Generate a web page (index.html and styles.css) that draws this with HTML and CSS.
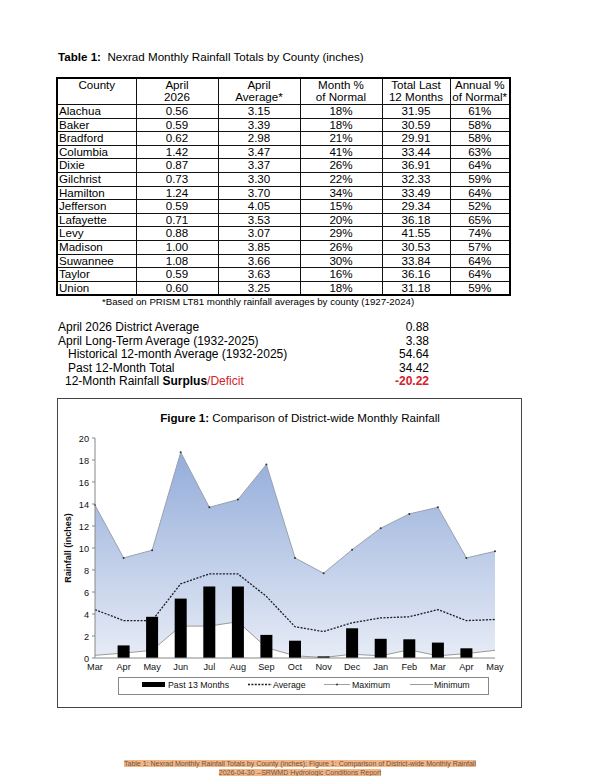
FILE: index.html
```html
<!DOCTYPE html>
<html lang="en">
<head>
    <meta charset="UTF-8">
    <meta name="viewport" content="width=device-width, initial-scale=1.0">
    <title>SRWMD Hydrologic Conditions Report</title>
    <link rel="stylesheet" href="styles.css">
</head>
<body>
    <div class="page">
        <div class="table-title"><b>Table 1:</b>&nbsp; Nexrad Monthly Rainfall Totals by County (inches)</div>

        <table class="rain-table">
            <colgroup>
                <col style="width: 79px">
                <col style="width: 82px">
                <col style="width: 82px">
                <col style="width: 82px">
                <col style="width: 68px">
                <col style="width: 60px">
            </colgroup>
            <thead>
                <tr>
                    <th>County</th>
                    <th>April<br>2026</th>
                    <th>April<br>Average*</th>
                    <th>Month %<br>of Normal</th>
                    <th>Total Last<br>12 Months</th>
                    <th>Annual %<br>of Normal*</th>
                </tr>
            </thead>
            <tbody>
                <tr><td>Alachua</td><td>0.56</td><td>3.15</td><td>18%</td><td>31.95</td><td>61%</td></tr>
                <tr><td>Baker</td><td>0.59</td><td>3.39</td><td>18%</td><td>30.59</td><td>58%</td></tr>
                <tr><td>Bradford</td><td>0.62</td><td>2.98</td><td>21%</td><td>29.91</td><td>58%</td></tr>
                <tr><td>Columbia</td><td>1.42</td><td>3.47</td><td>41%</td><td>33.44</td><td>63%</td></tr>
                <tr><td>Dixie</td><td>0.87</td><td>3.37</td><td>26%</td><td>36.91</td><td>64%</td></tr>
                <tr><td>Gilchrist</td><td>0.73</td><td>3.30</td><td>22%</td><td>32.33</td><td>59%</td></tr>
                <tr><td>Hamilton</td><td>1.24</td><td>3.70</td><td>34%</td><td>33.49</td><td>64%</td></tr>
                <tr><td>Jefferson</td><td>0.59</td><td>4.05</td><td>15%</td><td>29.34</td><td>52%</td></tr>
                <tr><td>Lafayette</td><td>0.71</td><td>3.53</td><td>20%</td><td>36.18</td><td>65%</td></tr>
                <tr><td>Levy</td><td>0.88</td><td>3.07</td><td>29%</td><td>41.55</td><td>74%</td></tr>
                <tr><td>Madison</td><td>1.00</td><td>3.85</td><td>26%</td><td>30.53</td><td>57%</td></tr>
                <tr><td>Suwannee</td><td>1.08</td><td>3.66</td><td>30%</td><td>33.84</td><td>64%</td></tr>
                <tr><td>Taylor</td><td>0.59</td><td>3.63</td><td>16%</td><td>36.16</td><td>64%</td></tr>
                <tr><td>Union</td><td>0.60</td><td>3.25</td><td>18%</td><td>31.18</td><td>59%</td></tr>
            </tbody>
        </table>
        <div class="footnote">*Based on PRISM LT81 monthly rainfall averages by county (1927-2024)</div>

        <div class="summary">
            <div class="label">April 2026 District Average</div><div class="value">0.88</div>
            <div class="label">April Long-Term Average (1932-2025)</div><div class="value">3.38</div>
            <div class="label indent">Historical 12-month Average (1932-2025)</div><div class="value">54.64</div>
            <div class="label indent">Past 12-Month Total</div><div class="value">34.42</div>
            <div class="label indent-sm">12-Month Rainfall <b>Surplus</b><span class="deficit">/Deficit</span></div><div class="value deficit"><b>-20.22</b></div>
        </div>

        <div class="chart-box">
            <svg class="chart" width="465" height="310" viewBox="57 397 465 310">
                <defs>
                    <linearGradient id="rangeFill" gradientUnits="userSpaceOnUse" x1="0" y1="437" x2="0" y2="657">
                        <stop offset="0" stop-color="#8ea8d8"/>
                        <stop offset="1" stop-color="#e7ecf6"/>
                    </linearGradient>
                </defs>

                <text class="chart-title" x="300" y="421" text-anchor="middle"><tspan font-weight="bold">Figure 1:</tspan>  Comparison of District-wide Monthly Rainfall</text>

                <!-- range between monthly minimum and maximum -->
                <polygon fill="url(#rangeFill)" points="95,504.1 123.6,556.9 152.1,549.2 180.7,451.3 209.3,506.3 237.9,498.6 266.4,463.4 295,556.9 323.6,572.3 352.1,548.7 380.7,527.2 409.3,512.9 437.9,506.3 466.4,556.9 495,550.3 495,649.3 466.4,652.6 437.9,654.8 409.3,648.8 380.7,654.8 352.1,653.2 323.6,656.5 295,654.8 266.4,646.6 237.9,620.7 209.3,625.1 180.7,625.1 152.1,649.3 123.6,652.1 95,654.3"/>
                <polyline class="line-min" points="95,654.3 123.6,652.1 152.1,649.3 180.7,625.1 209.3,625.1 237.9,620.7 266.4,646.6 295,654.8 323.6,656.5 352.1,653.2 380.7,654.8 409.3,648.8 437.9,654.8 466.4,652.6 495,649.3"/>
                <polyline class="line-max" points="95,504.1 123.6,556.9 152.1,549.2 180.7,451.3 209.3,506.3 237.9,498.6 266.4,463.4 295,556.9 323.6,572.3 352.1,548.7 380.7,527.2 409.3,512.9 437.9,506.3 466.4,556.9 495,550.3"/>
                <g class="max-dots">
                    <circle cx="95" cy="504.1" r="1"/><circle cx="123.6" cy="556.9" r="1"/><circle cx="152.1" cy="549.2" r="1"/>
                    <circle cx="180.7" cy="451.3" r="1"/><circle cx="209.3" cy="506.3" r="1"/><circle cx="237.9" cy="498.6" r="1"/>
                    <circle cx="266.4" cy="463.4" r="1"/><circle cx="295" cy="556.9" r="1"/><circle cx="323.6" cy="572.3" r="1"/>
                    <circle cx="352.1" cy="548.7" r="1"/><circle cx="380.7" cy="527.2" r="1"/><circle cx="409.3" cy="512.9" r="1"/>
                    <circle cx="437.9" cy="506.3" r="1"/><circle cx="466.4" cy="556.9" r="1"/><circle cx="495" cy="550.3" r="1"/>
                </g>
                <polyline class="line-avg" points="95,608.6 123.6,619.6 152.1,619.6 180.7,582.8 209.3,572.9 237.9,572.9 266.4,595.4 295,625.7 323.6,630.6 352.1,621.8 380.7,616.9 409.3,615.8 437.9,608.6 466.4,619.6 495,618.5"/>

                <!-- past 13 months -->
                <g class="bars">
                    <rect x="117.6" y="644.4" width="12" height="12.6"/>
                    <rect x="146.1" y="615.8" width="12" height="41.2"/>
                    <rect x="174.7" y="597.6" width="12" height="59.4"/>
                    <rect x="203.3" y="585.5" width="12" height="71.5"/>
                    <rect x="231.9" y="585.5" width="12" height="71.5"/>
                    <rect x="260.4" y="633.9" width="12" height="23.1"/>
                    <rect x="289" y="639.7" width="12" height="17.3"/>
                    <rect x="317.6" y="655.4" width="12" height="1.6"/>
                    <rect x="346.1" y="627.3" width="12" height="29.7"/>
                    <rect x="374.7" y="637.8" width="12" height="19.2"/>
                    <rect x="403.3" y="638.3" width="12" height="18.7"/>
                    <rect x="431.9" y="641.6" width="12" height="15.4"/>
                    <rect x="460.4" y="647.3" width="12" height="9.7"/>
                </g>

                <!-- axes -->
                <g class="axis">
                    <line x1="95" y1="437" x2="95" y2="657"/>
                    <line x1="95" y1="657" x2="495" y2="657"/>
                    <line x1="92" y1="437" x2="95" y2="437"/>
                    <line x1="92" y1="459" x2="95" y2="459"/>
                    <line x1="92" y1="481" x2="95" y2="481"/>
                    <line x1="92" y1="503" x2="95" y2="503"/>
                    <line x1="92" y1="525" x2="95" y2="525"/>
                    <line x1="92" y1="547" x2="95" y2="547"/>
                    <line x1="92" y1="569" x2="95" y2="569"/>
                    <line x1="92" y1="591" x2="95" y2="591"/>
                    <line x1="92" y1="613" x2="95" y2="613"/>
                    <line x1="92" y1="635" x2="95" y2="635"/>
                    <line x1="92" y1="657" x2="95" y2="657"/>
                </g>
                <g class="tick-label" text-anchor="end">
                    <text x="89" y="440.5">20</text>
                    <text x="89" y="462.5">18</text>
                    <text x="89" y="484.5">16</text>
                    <text x="89" y="506.5">14</text>
                    <text x="89" y="528.5">12</text>
                    <text x="89" y="550.5">10</text>
                    <text x="89" y="572.5">8</text>
                    <text x="89" y="594.5">6</text>
                    <text x="89" y="616.5">4</text>
                    <text x="89" y="638.5">2</text>
                    <text x="89" y="660.5">0</text>
                </g>
                <g class="tick-label" text-anchor="middle">
                    <text x="95" y="668.5">Mar</text>
                    <text x="123.6" y="668.5">Apr</text>
                    <text x="152.1" y="668.5">May</text>
                    <text x="180.7" y="668.5">Jun</text>
                    <text x="209.3" y="668.5">Jul</text>
                    <text x="237.9" y="668.5">Aug</text>
                    <text x="266.4" y="668.5">Sep</text>
                    <text x="295" y="668.5">Oct</text>
                    <text x="323.6" y="668.5">Nov</text>
                    <text x="352.1" y="668.5">Dec</text>
                    <text x="380.7" y="668.5">Jan</text>
                    <text x="409.3" y="668.5">Feb</text>
                    <text x="437.9" y="668.5">Mar</text>
                    <text x="466.4" y="668.5">Apr</text>
                    <text x="495" y="668.5">May</text>
                </g>
                <text class="axis-title" transform="translate(71 547) rotate(-90)" text-anchor="middle">Rainfall (inches)</text>

                <!-- legend -->
                <rect class="legend-box" x="118.5" y="676.5" width="370" height="17"/>
                <rect x="142" y="681" width="23" height="5" fill="#000"/>
                <text class="legend-label" x="168" y="686.5">Past 13 Months</text>
                <line class="line-avg" x1="248" y1="683.5" x2="272" y2="683.5"/>
                <text class="legend-label" x="273" y="686.5">Average</text>
                <line class="line-max" x1="324" y1="683.5" x2="350" y2="683.5"/>
                <circle cx="337" cy="683.5" r="1" fill="#333"/>
                <text class="legend-label" x="352" y="686.5">Maximum</text>
                <line class="line-min" x1="410" y1="683.5" x2="433" y2="683.5"/>
                <text class="legend-label" x="434" y="686.5">Minimum</text>
            </svg>
        </div>

        <div class="page-footer">
            <span>Table 1: Nexrad Monthly Rainfall Totals by County (inches); Figure 1: Comparison of District-wide Monthly Rainfall</span><br>
            <span>2026-04-30 --SRWMD Hydrologic Conditions Report</span>
        </div>
    </div>
</body>
</html>
```

FILE: styles.css
```css
body {
    font-family: "Liberation Sans", Arial, sans-serif;
    font-size: 11.6px;
    color: #000;
    background-color: #fff;
    margin: 0;
}
.page {
    width: 600px;
    padding-left: 56px;
    box-sizing: border-box;
}
.table-title {
    margin-top: 50px;
    padding-left: 2px;
    line-height: 14px;
}
.rain-table {
    margin-top: 13px;
    border-collapse: collapse;
    border: 2px solid #000;
    table-layout: fixed;
    width: 453px;
}
.rain-table th,
.rain-table td {
    border: 1px solid #111;
    padding: 0;
    text-align: center;
}
.rain-table th {
    font-weight: normal;
    line-height: 12px;
    padding-bottom: 1px;
    vertical-align: top;
}
.rain-table td {
    line-height: 12.6px;
}
.rain-table td:first-child {
    text-align: left;
    padding-left: 1px;
}
.footnote {
    font-size: 9.7px;
    line-height: 11px;
    padding-left: 46px;
}
.summary {
    display: grid;
    grid-template-columns: 1fr auto;
    width: 371px;
    margin: 14px 0 0 2px;
    font-size: 12px;
    line-height: 13.5px;
}
.summary .value {
    text-align: right;
}
.summary .indent {
    padding-left: 10px;
}
.summary .indent-sm {
    padding-left: 7px;
}
.deficit {
    color: #d4212b;
}
.chart-box {
    width: 465px;
    height: 310px;
    margin: 9px 0 0 1px;
    border: 1px solid #444;
    box-sizing: border-box;
    overflow: hidden;
}
.chart {
    display: block;
    margin: -1px;
    font-family: "Liberation Sans", Arial, sans-serif;
}
.chart-title {
    font-size: 11.6px;
    fill: #000;
}
.line-max {
    fill: none;
    stroke: #9aa0ae;
    stroke-width: 1;
}
.line-min {
    fill: none;
    stroke: #9a9a9a;
    stroke-width: 1;
}
.line-avg {
    fill: none;
    stroke: #1a1a2a;
    stroke-width: 1.3;
    stroke-dasharray: 2 1.4;
}
.max-dots {
    fill: #333;
}
.bars {
    fill: #000;
}
.axis line {
    stroke: #888;
    stroke-width: 1;
}
.tick-label {
    font-size: 9.2px;
    fill: #111;
}
.axis-title {
    font-size: 9px;
    font-weight: bold;
    fill: #111;
}
.legend-box {
    fill: #fff;
    stroke: #888;
    stroke-width: 1;
}
.legend-label {
    font-size: 8.8px;
    fill: #111;
}
.page-footer {
    margin: 51px 0 0 -56px;
    width: 600px;
    text-align: center;
    font-size: 7px;
    line-height: 9px;
    color: #6a5440;
}
.page-footer span {
    background-color: #f4b586;
}
```
